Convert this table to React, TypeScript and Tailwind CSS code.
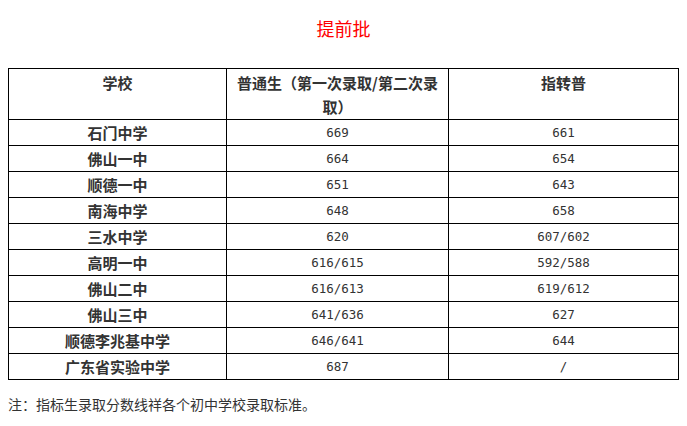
import React from "react"

const rows: [string, string, string][] = [
  ["石门中学", "669", "661"],
  ["佛山一中", "664", "654"],
  ["顺德一中", "651", "643"],
  ["南海中学", "648", "658"],
  ["三水中学", "620", "607/602"],
  ["高明一中", "616/615", "592/588"],
  ["佛山二中", "616/613", "619/612"],
  ["佛山三中", "641/636", "627"],
  ["顺德李兆基中学", "646/641", "644"],
  ["广东省实验中学", "687", "/"],
]

const cjk = "font-['SimSun','Noto_Sans_CJK_SC',sans-serif]"
const mono = "font-['DejaVu_Sans_Mono','Noto_Sans_CJK_SC',monospace]"

export default function App() {
  return (
    <div className={`w-[687px] h-[426px] bg-white text-[#333] ${cjk}`}>
      <div className="pt-[16px] h-[68px] text-center text-[18px] leading-[24px] text-[#ff0000]">提前批</div>

      <table className="ml-[8px] w-[670px] border-collapse border border-black table-fixed">
        <colgroup>
          <col className="w-[218px]" />
          <col className="w-[222px]" />
          <col className="w-[230px]" />
        </colgroup>
        <thead>
          <tr className="h-[50px]">
            <th className="border border-black align-top px-[6px] pt-[2px] pb-0 font-bold text-[15px] leading-[24px]">学校</th>
            <th className="border border-black align-top px-[6px] pt-[2px] pb-0 font-bold text-[15px] leading-[24px]">
              普通生（第一次录取/第二次录取）
            </th>
            <th className="border border-black align-top px-[6px] pt-[2px] pb-0 font-bold text-[15px] leading-[24px]">指转普</th>
          </tr>
        </thead>
        <tbody>
          {rows.map(([name, a, b]) => (
            <tr key={name} className="h-[26px]">
              <td className="border border-black text-center font-bold text-[15px] leading-[24px] p-0">{name}</td>
              <td className={`border border-black text-center text-[12.5px] leading-[24px] p-0 ${mono}`}>{a}</td>
              <td className={`border border-black text-center text-[12.5px] leading-[24px] p-0 ${mono}`}>{b}</td>
            </tr>
          ))}
        </tbody>
      </table>

      <div className="mt-[14px] ml-[8px] text-[14px] leading-[20px]">注：指标生录取分数线祥各个初中学校录取标准。</div>
    </div>
  )
}
